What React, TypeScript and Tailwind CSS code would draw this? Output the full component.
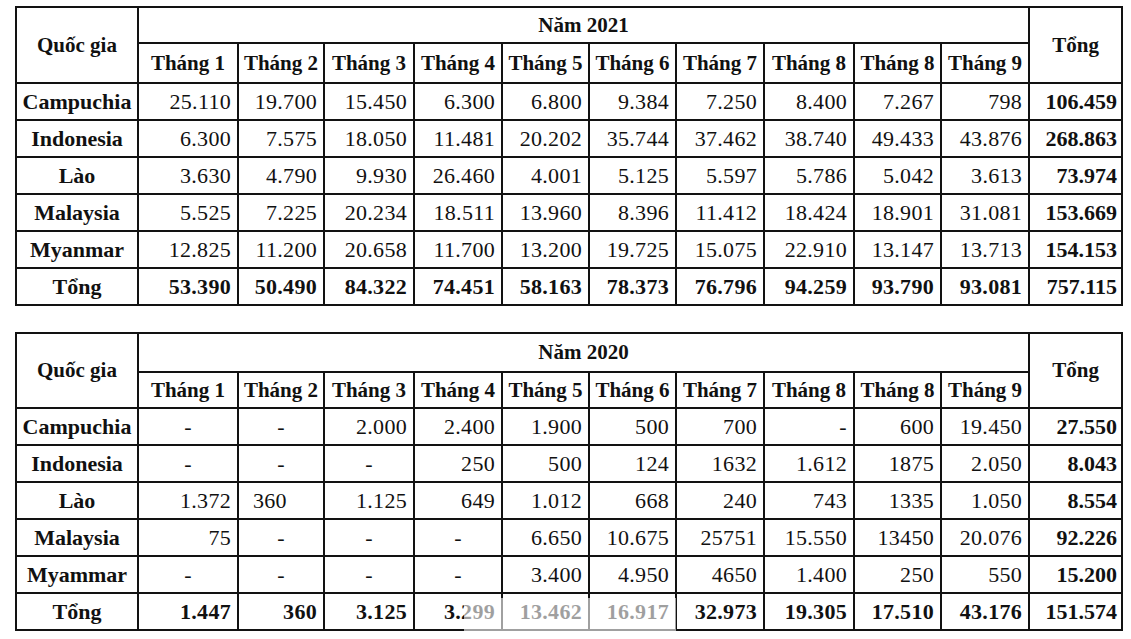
import React from "react";

type Cell = { v: string; align?: "r" | "c" | "l" };

const months = ["Tháng 1", "Tháng 2", "Tháng 3", "Tháng 4", "Tháng 5", "Tháng 6", "Tháng 7", "Tháng 8", "Tháng 8", "Tháng 9"];
const colWidths = [122, 100, 86, 90, 88, 87, 87, 88, 90, 87, 88, 93];

const r = (s: string): Cell[] =>
  s.split(" ").map((v) => ({ v: v.replace(/^c:|^l:/, ""), align: v.startsWith("c:") ? "c" : v.startsWith("l:") ? "l" : "r" }));

const data2021: { name: string; cells: Cell[]; total: string }[] = [
  { name: "Campuchia", cells: r("25.110 19.700 15.450 6.300 6.800 9.384 7.250 8.400 7.267 798"), total: "106.459" },
  { name: "Indonesia", cells: r("6.300 7.575 18.050 11.481 20.202 35.744 37.462 38.740 49.433 43.876"), total: "268.863" },
  { name: "Lào", cells: r("3.630 4.790 9.930 26.460 4.001 5.125 5.597 5.786 5.042 3.613"), total: "73.974" },
  { name: "Malaysia", cells: r("5.525 7.225 20.234 18.511 13.960 8.396 11.412 18.424 18.901 31.081"), total: "153.669" },
  { name: "Myanmar", cells: r("12.825 11.200 20.658 11.700 13.200 19.725 15.075 22.910 13.147 13.713"), total: "154.153" },
];
const sum2021 = { cells: r("53.390 50.490 84.322 74.451 58.163 78.373 76.796 94.259 93.790 93.081"), total: "757.115" };

const data2020: { name: string; cells: Cell[]; total: string }[] = [
  { name: "Campuchia", cells: r("c:- c:- 2.000 2.400 1.900 500 700 - 600 19.450"), total: "27.550" },
  { name: "Indonesia", cells: r("c:- c:- c:- 250 500 124 1632 1.612 1875 2.050"), total: "8.043" },
  { name: "Lào", cells: r("1.372 l:360 1.125 649 1.012 668 240 743 1335 1.050"), total: "8.554" },
  { name: "Malaysia", cells: r("75 c:- c:- c:- 6.650 10.675 25751 15.550 13450 20.076"), total: "92.226" },
  { name: "Myammar", cells: r("c:- c:- c:- c:- 3.400 4.950 4650 1.400 250 550"), total: "15.200" },
];
const sum2020 = { cells: r("1.447 360 3.125 3.299 13.462 16.917 32.973 19.305 17.510 43.176"), total: "151.574" };

const bd = "border-2 border-[#121212]";

function NumCell({ c, bold }: { c: Cell; bold?: boolean }) {
  const align = c.align === "c" ? "text-center" : c.align === "l" ? "text-left pl-[14px]" : "text-right pr-[6px]";
  return <td className={`${bd} ${align} text-[22px] tracking-[0.3px] ${bold ? "font-bold" : ""}`}>{c.v}</td>;
}

function YearTable({
  year,
  rows,
  sum,
  h1,
  h2,
}: {
  year: string;
  rows: { name: string; cells: Cell[]; total: string }[];
  sum: { cells: Cell[]; total: string };
  h1: string;
  h2: string;
}) {
  return (
    <table className="table-fixed border-collapse w-[1106px] text-[21px] leading-none text-[#111]">
      <colgroup>
        {colWidths.map((w, i) => (
          <col key={i} style={{ width: w }} />
        ))}
      </colgroup>
      <tbody>
        <tr className={h1}>
          <td rowSpan={2} className={`${bd} text-center font-bold`}>Quốc gia</td>
          <td colSpan={10} className={`${bd} text-center font-bold`}>Năm {year}</td>
          <td rowSpan={2} className={`${bd} text-center font-bold`}>Tổng</td>
        </tr>
        <tr className={h2}>
          {months.map((m, i) => (
            <td key={i} className={`${bd} text-center font-bold whitespace-nowrap`}>{m}</td>
          ))}
        </tr>
        {rows.map((row) => (
          <tr key={row.name} className="h-[37px]">
            <td className={`${bd} text-center font-bold text-[22px]`}>{row.name}</td>
            {row.cells.map((c, i) => (
              <NumCell key={i} c={c} />
            ))}
            <td className={`${bd} text-right pr-[4px] font-bold text-[22px]`}>{row.total}</td>
          </tr>
        ))}
        <tr className="h-[37px]">
          <td className={`${bd} text-center font-bold text-[22px]`}>Tổng</td>
          {sum.cells.map((c, i) => (
            <NumCell key={i} c={c} bold />
          ))}
          <td className={`${bd} text-right pr-[4px] font-bold text-[22px]`}>{sum.total}</td>
        </tr>
      </tbody>
    </table>
  );
}

export default function App() {
  return (
    <div className="relative w-[1131px] h-[639px] bg-white overflow-hidden font-['Liberation_Serif','Times_New_Roman',serif]">
      <div className="flex flex-col gap-[26px] pl-[15px] pt-[6px]">
        <YearTable year="2021" rows={data2021} sum={sum2021} h1="h-[36px]" h2="h-[40px]" />
        <YearTable year="2020" rows={data2020} sum={sum2020} h1="h-[39px]" h2="h-[36px]" />
      </div>
      {/* faded watermark over the last row */}
      <div className="absolute left-[464px] top-[598px] w-[212px] h-[41px] bg-white/60" />
    </div>
  );
}
